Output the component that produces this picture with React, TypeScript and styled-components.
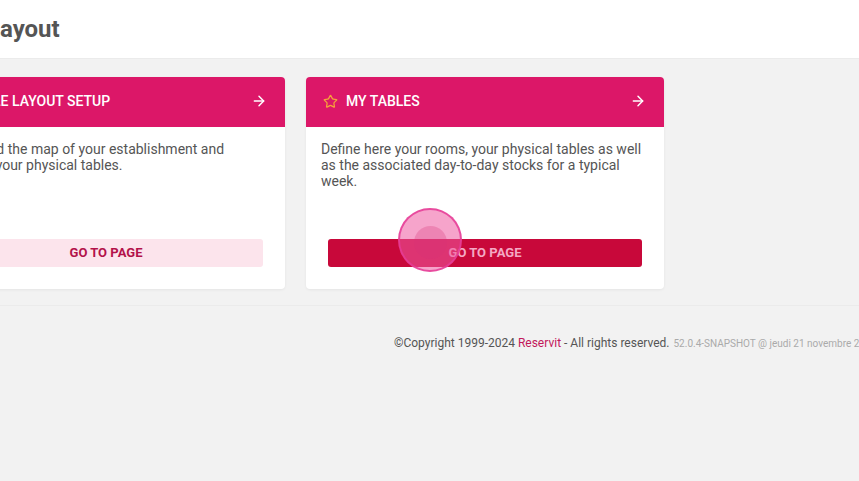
import React from "react";
import styled, { createGlobalStyle } from "styled-components";
import { ArrowRight, Star } from "lucide-react";

// Layout page: table plan cards with a tap indicator
const colors = {
  pink: "#dc1768",
  crimson: "#c8083a",
  softPink: "#fce4ec",
  text: "#555555",
  muted: "#aaaaaa",
  page: "#f2f2f2",
  star: "#f5a23a",
};

type CardData = {
  title: string;
  text: string;
  primary: boolean;
};

const cards: CardData[] = [
  {
    title: "Table layout setup",
    text: "Now build the map of your establishment and position your physical tables.",
    primary: false,
  },
  {
    title: "My tables",
    text: "Define here your rooms, your physical tables as well as the associated day-to-day stocks for a typical week.",
    primary: true,
  },
];

const App = (): JSX.Element => {
  return (
    <Page>
      <GlobalStyle />
      <TopBar>
        <Title>Layout</Title>
      </TopBar>
      <Content>
        <CardRow>
          {cards.map((card) => (
            <Card key={card.title}>
              <CardHeader>
                <HeaderLabel>
                  <Star size={15} color={colors.star} strokeWidth={2} />
                  <span>{card.title}</span>
                </HeaderLabel>
                <ArrowRight size={16} strokeWidth={2.2} />
              </CardHeader>
              <CardBody>
                <Description>{card.text}</Description>
                <PageButton $primary={card.primary}>Go to page</PageButton>
              </CardBody>
            </Card>
          ))}
        </CardRow>
      </Content>
      <Footer>
        ©Copyright 1999-2024 <Brand>Reservit</Brand> - All rights reserved.
        <Version>52.0.4-SNAPSHOT @ jeudi 21 novembre 2024</Version>
      </Footer>
      <TapIndicator>
        <TapCore />
      </TapIndicator>
    </Page>
  );
};

// Styled components
const GlobalStyle = createGlobalStyle`
  html, body {
    margin: 0;
    padding: 0;
    background: ${colors.page};
    font-family: Roboto, "Liberation Sans", Arial, sans-serif;
    overflow: hidden;
  }
`;
const Page = styled.div`
  position: relative;
  width: 859px;
  height: 481px;
  overflow: hidden;
  background: ${colors.page};
`;
const TopBar = styled.header`
  height: 59px;
  background: #ffffff;
  border-bottom: 1px solid #ebebeb;
  display: flex;
  align-items: center;
  box-sizing: border-box;
`;
const Title = styled.h1`
  margin: 0 0 0 -13px;
  font-size: 24px;
  font-weight: 700;
  color: ${colors.text};
`;
const Content = styled.main`
  padding: 18px 0 16px;
  border-bottom: 1px solid #ebebeb;
`;
const CardRow = styled.div`
  display: flex;
  gap: 21px;
  margin-left: -73px;
`;
const Card = styled.section`
  width: 358px;
  height: 212px;
  display: flex;
  flex-direction: column;
  background: #ffffff;
  border-radius: 4px;
  overflow: hidden;
  box-shadow: 0 1px 3px rgba(0, 0, 0, 0.06);
`;
const CardHeader = styled.div`
  height: 50px;
  flex: none;
  box-sizing: border-box;
  display: flex;
  align-items: center;
  justify-content: space-between;
  padding: 0 18px 2px 17px;
  background: ${colors.pink};
  color: #ffffff;
`;
const HeaderLabel = styled.div`
  display: flex;
  align-items: center;
  gap: 8px;
  font-size: 14px;
  font-weight: 500;
  text-transform: uppercase;
  white-space: nowrap;
`;
const CardBody = styled.div`
  flex: 1;
  display: flex;
  flex-direction: column;
  padding: 14px 15px 22px;
`;
const Description = styled.p`
  margin: 0;
  font-size: 14px;
  line-height: 16px;
  color: ${colors.text};
`;
const PageButton = styled.button<{ $primary: boolean }>`
  margin: auto 7px 0;
  height: 28px;
  padding: 0 0 2px;
  border: none;
  border-radius: 3px;
  font-family: inherit;
  font-size: 13px;
  font-weight: 700;
  text-transform: uppercase;
  background: ${(p) => (p.$primary ? colors.crimson : colors.softPink)};
  color: ${(p) => (p.$primary ? "#f4a9c4" : "#b3124a")};
`;
const Footer = styled.footer`
  padding: 30px 0 0 394px;
  white-space: nowrap;
  font-size: 12px;
  color: ${colors.text};
`;
const Brand = styled.span`
  color: #c2185b;
`;
const Version = styled.span`
  margin-left: 4px;
  font-size: 10px;
  color: ${colors.muted};
`;
const TapIndicator = styled.div`
  position: absolute;
  left: 398px;
  top: 208px;
  width: 64px;
  height: 64px;
  box-sizing: border-box;
  border-radius: 50%;
  border: 2px solid rgba(230, 60, 150, 0.85);
  background: rgba(238, 90, 160, 0.55);
  display: flex;
  align-items: center;
  justify-content: center;
`;
const TapCore = styled.div`
  width: 33px;
  height: 33px;
  margin-top: 4px;
  border-radius: 50%;
  background: rgba(214, 50, 120, 0.28);
`;

export default App;
